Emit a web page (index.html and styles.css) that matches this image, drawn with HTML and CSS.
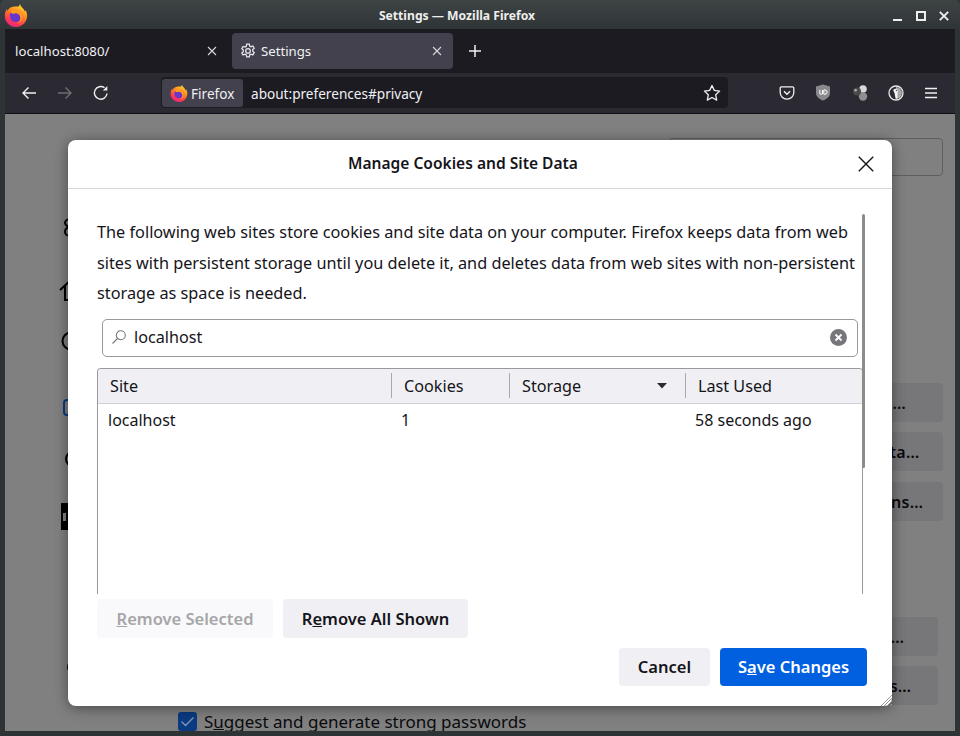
FILE: index.html
```html
<!DOCTYPE html>
<html lang="en">
<head>
<meta charset="utf-8">
<title>Settings — Mozilla Firefox</title>
<link rel="stylesheet" href="styles.css">
</head>
<body>
<svg class="defs" width="0" height="0" aria-hidden="true">
  <defs>
    <linearGradient id="fxg" x1="0.75" y1="0" x2="0.25" y2="1">
      <stop offset="0" stop-color="#ffdd33"/>
      <stop offset="0.4" stop-color="#ff8a1f"/>
      <stop offset="0.75" stop-color="#ff3a50"/>
      <stop offset="1" stop-color="#e3208f"/>
    </linearGradient>
    <symbol id="fx" viewBox="0 0 24 24">
      <path fill="url(#fxg)" d="M16 1c.5 2.500 2 3 3.500 5 .6.800 1 1.500 1.500 2.500.3-.5.500-1 .6-1.500 1.300 2.500 1.900 5 1.400 7.500C22 20 17.500 24 12 24 5.500 24 .8 19 .8 13 .8 10 1.700 7.500 3 6c0 .8.200 1.500.5 2 .8-2 2.500-3.500 4.500-4 2.500-.7 5-.5 6.500-.5.700-.7 1.300-1.500 1.500-2.500z"/>
      <circle cx="12" cy="13" r="6.200" fill="#6a35c9"/>
      <path fill="#ff9a1f" d="M6 9c2-2.500 6-3.500 9-2 3 1.500 4.500 5 3 9-1 2.500-3 4-5.500 4.200 2.500-1 4-3 3.800-5.700-.2-2.500-2.300-4.300-4.800-4.200-1 0-1.800.3-2.500.8-1-.8-2-1.700-3-2.100z"/>
    </symbol>
  </defs>
</svg>
<div class="window">
  <header class="titlebar">
    <svg class="app-logo" width="24" height="24"><use href="#fx"/></svg>
    <div class="title">Settings — Mozilla Firefox</div>
    <div class="win-controls">
      <svg width="10" height="10" viewBox="0 0 10 10"><rect x="0" y="8" width="9" height="2" fill="#eee"/></svg>
      <svg width="10" height="10" viewBox="0 0 10 10"><path d="M1 1h8v8H1z" fill="none" stroke="#eee" stroke-width="2"/></svg>
      <svg width="10" height="10" viewBox="0 0 10 10"><path d="M.8.800l8.400 8.400M9.200.800L.8 9.200" stroke="#eee" stroke-width="1.900"/></svg>
    </div>
  </header>

  <div class="tabstrip">
    <div class="tab">
      <span class="tab-label">localhost:8080/</span>
      <svg class="tab-close" width="10" height="10" viewBox="0 0 10 10"><path d="M1 1l8 8M9 1l-8 8" stroke="#d8d8dc" stroke-width="1.100"/></svg>
    </div>
    <div class="tab active">
      <svg class="gear" width="16" height="16" viewBox="0 0 16 16" fill="none" stroke="#e8e8ec" stroke-width="1.250"><path d="M6.700 1h2.600l.4 2 1.300.7 1.900-.7 1.300 2.300-1.500 1.300v1.700l1.500 1.300-1.300 2.300-1.900-.7-1.300.7-.4 2H6.700l-.4-2-1.300-.7-1.900.7L1.800 10l1.500-1.300V7L1.800 5.700l1.300-2.300 1.900.7 1.300-.7z"/><circle cx="8" cy="7.900" r="2.300"/></svg>
      <span class="tab-label">Settings</span>
      <svg class="tab-close" width="10" height="10" viewBox="0 0 10 10"><path d="M1 1l8 8M9 1l-8 8" stroke="#d8d8dc" stroke-width="1.100"/></svg>
    </div>
    <svg class="new-tab" width="14" height="14" viewBox="0 0 14 14"><path d="M7 1v12M1 7h12" stroke="#f0f0f4" stroke-width="1.500"/></svg>
  </div>

  <nav class="navbar">
    <div class="nav-left">
      <svg width="16" height="16" viewBox="0 0 16 16" fill="none" stroke="#f0f0f4" stroke-width="1.400"><path d="M15 8H2M7.500 2.500L2 8l5.500 5.500"/></svg>
      <svg width="16" height="16" viewBox="0 0 16 16" fill="none" stroke="#6f6e75" stroke-width="1.400"><path d="M1 8h13M8.500 2.500L14 8l-5.500 5.500"/></svg>
      <svg width="16" height="16" viewBox="0 0 16 16" fill="none" stroke="#f0f0f4" stroke-width="1.400"><path d="M14 8.500A6.300 6.300 0 1 1 11.500 2.800"/><path d="M14.300 1v4.500H9.800z" fill="#f0f0f4" stroke="none"/></svg>
    </div>
    <div class="urlbar">
      <div class="identity">
        <svg width="18" height="18"><use href="#fx"/></svg>
        <span>Firefox</span>
      </div>
      <span class="url">about:preferences#privacy</span>
      <svg class="star" width="18" height="18" viewBox="0 0 18 18" fill="none" stroke="#f0f0f4" stroke-width="1.300" stroke-linejoin="round"><path d="M9 1.500l2.300 4.900 5.300.7-3.900 3.700 1 5.300L9 13.500l-4.700 2.600 1-5.300L1.400 7.100l5.300-.7z"/></svg>
    </div>
    <div class="nav-right">
      <svg width="16" height="16" viewBox="0 0 16 16" fill="none" stroke="#f0f0f4" stroke-width="1.300"><path d="M2.500 1.800h11c.8 0 1.300.5 1.300 1.300v4.400c0 3.800-3 6.700-6.800 6.700s-6.800-2.900-6.800-6.700V3.100c0-.8.500-1.300 1.300-1.300z"/><path d="M5 6.300l3 3 3-3" stroke-width="1.400"/></svg>
      <svg width="16" height="17" viewBox="0 0 16 17"><path d="M8 .5l7 2v6.500c0 3.500-3.200 6.200-7 7.500-3.800-1.300-7-4-7-7.500V2.500z" fill="#8a8a8e"/><path d="M4.800 6v3a1.300 1.300 0 0 0 2.700 0V6M8.800 6v4.200h1.200a2.100 2.100 0 0 0 0-4.200z" fill="none" stroke="#fff" stroke-width="1"/></svg>
      <svg width="18" height="18" viewBox="0 0 18 18"><circle cx="12" cy="5" r="3.800" fill="#d8d8d8"/><circle cx="12" cy="12.500" r="4.200" fill="#8f8f8f"/><circle cx="6" cy="7.500" r="4" fill="#4a4a4a"/><circle cx="4.600" cy="6.200" r="1.300" fill="#b0b0b0"/></svg>
      <svg width="16" height="16" viewBox="0 0 16 16"><circle cx="8" cy="8" r="7" fill="#2b2a33" stroke="#e8e8e8" stroke-width="1.300"/><path d="M8 2a6 6 0 0 1 0 12z" fill="#a8a8a8"/><path d="M5.500 4.500c1-1.200 3.500-1 4.200.5.500 1-.2 1.700-.2 3v5.500h-2l-1-5.500c-.5-1-1.500-2.500-1-3.500z" fill="#f4f4f4"/><circle cx="8.500" cy="5.500" r=".8" fill="#555"/></svg>
      <svg width="14" height="12" viewBox="0 0 14 12"><path d="M1 1.500h12M1 6h12M1 10.500h12" stroke="#f0f0f4" stroke-width="1.300"/></svg>
    </div>
  </nav>

  <main class="content">
    <aside class="side-icons">
      <svg width="24" height="24" viewBox="0 0 24 24" fill="none" stroke="#000" stroke-width="2"><path d="M12 3c-4 0-6 2-6 4s2 3 4 4c-3 1-4 3-4 5s2 4 6 4"/></svg>
      <svg width="24" height="24" viewBox="0 0 24 24" fill="none" stroke="#000" stroke-width="2"><path d="M1 12L12 2M6 8v14h8"/></svg>
      <svg width="24" height="24" viewBox="0 0 24 24" fill="none" stroke="#000" stroke-width="2"><circle cx="12" cy="12" r="8.500"/></svg>
      <svg width="24" height="24" viewBox="0 0 24 24" fill="none" stroke="#0a3d80" stroke-width="2"><rect x="5" y="4" width="16" height="15" rx="3"/></svg>
      <svg width="24" height="24" viewBox="0 0 24 24" fill="none" stroke="#000" stroke-width="2"><circle cx="14" cy="12" r="7"/></svg>
      <svg width="24" height="28" viewBox="0 0 24 28"><rect x="2" y="1" width="22" height="27" fill="#000"/><rect x="4" y="11" width="3" height="8" fill="#808080"/></svg>
      <svg width="24" height="24" viewBox="0 0 24 24" fill="none" stroke="#000" stroke-width="2"><circle cx="15" cy="12" r="6"/></svg>
    </aside>
    <section class="page-col">
      <div class="find-box"></div>
      <div class="btn-stack first">
        <div class="bg-btn">Clear Data…</div>
        <div class="bg-btn">Manage Data…</div>
        <div class="bg-btn third">Exceptions…</div>
      </div>
      <div class="btn-stack second">
        <div class="bg-btn">Exceptions…</div>
        <div class="bg-btn">Saved Logins…</div>
      </div>
      <div class="check-row">
        <span class="checkbox"><svg width="19" height="19" viewBox="0 0 19 19" fill="none" stroke="#8096b8" stroke-width="1.400"><path d="M3.500 9.500l4 4 8-8"/></svg></span>
        <span class="check-label">S<u>u</u>ggest and generate strong passwords</span>
      </div>
    </section>
  </main>
  <div class="frame-bottom"></div>
</div>

<div class="dialog" role="dialog">
  <div class="dialog-head">
    <h1>Manage Cookies and Site Data</h1>
    <svg class="dialog-close" width="16" height="16" viewBox="0 0 16 16"><path d="M.8.800l14.400 14.400M15.200.800L.8 15.200" stroke="#15141a" stroke-width="1.400"/></svg>
  </div>
  <div class="dialog-body">
    <div class="scrollbar"></div>
    <p class="intro">The following web sites store cookies and site data on your computer. Firefox keeps data from web sites with persistent storage until you delete it, and deletes data from web sites with non-persistent storage as space is needed.</p>
    <div class="search">
      <svg width="16" height="16" viewBox="0 0 16 16" fill="none" stroke="#77767c" stroke-width="1.100"><circle cx="9.800" cy="6.200" r="4.500"/><path d="M6.500 9.500L1.500 14.500"/></svg>
      <span class="search-text">localhost</span>
      <svg class="clear" width="17" height="17" viewBox="0 0 17 17"><circle cx="8.500" cy="8.500" r="8.500" fill="#77767c"/><path d="M5.500 5.500l6 6M11.500 5.500l-6 6" stroke="#fff" stroke-width="1.800"/></svg>
    </div>
    <div class="table">
      <div class="thead">
        <div class="th c-site">Site</div>
        <div class="th c-cookies">Cookies</div>
        <div class="th c-storage">Storage<svg width="10" height="6" viewBox="0 0 10 6"><path d="M0 0h10L5 5.500z" fill="#2b2a33"/></svg></div>
        <div class="th c-used">Last Used</div>
      </div>
      <div class="tr">
        <div class="td c-site">localhost</div>
        <div class="td c-cookies">1</div>
        <div class="td c-storage"></div>
        <div class="td c-used">58 seconds ago</div>
      </div>
    </div>
    <div class="table-actions">
      <button class="btn disabled wide-a"><u>R</u>emove Selected</button>
      <button class="btn wide-b">R<u>e</u>move All Shown</button>
    </div>
    <div class="dialog-actions">
      <button class="btn cancel">Cancel</button>
      <button class="btn primary">S<u>a</u>ve Changes</button>
    </div>
  </div>
  <svg class="resizer" width="12" height="12" viewBox="0 0 12 12" stroke="#9a9a9a" stroke-width="1"><path d="M1 12L12 1M4 12l8-8M7 12l5-5M10 12l2-2"/></svg>
</div>
</body>
</html>
```
FILE: styles.css
```css
* { box-sizing: border-box; }
html, body { margin: 0; padding: 0; }
body {
  width: 960px;
  height: 736px;
  overflow: hidden;
  position: relative;
  font-family: "Noto Sans", "Open Sans", sans-serif;
  color: #15141a;
  background: #2e3436;
}
.defs { position: absolute; }
.window {
  display: flex;
  flex-direction: column;
  height: 736px;
}
.titlebar {
  height: 29px;
  flex: none;
  display: flex;
  align-items: center;
  justify-content: center;
  position: relative;
  padding: 2px 46px 0 0;
  background: linear-gradient(#3e4444, #2f3537);
  color: #eeeeec;
  font-size: 12.150px;
  font-weight: 700;
  border-radius: 5px 5px 0 0;
}
.app-logo { position: absolute; left: 4px; top: 3px; }
.win-controls {
  position: absolute;
  right: 11px;
  top: 11px;
  display: flex;
  gap: 13px;
}
.tabstrip {
  height: 44px;
  flex: none;
  margin: 0 5px;
  padding: 4px 0 4px 0;
  background: #1c1b22;
  display: flex;
  align-items: stretch;
  color: #f0f0f4;
  font-size: 13.200px;
}
.tab {
  width: 227px;
  display: flex;
  align-items: center;
  padding: 0 15px 0 10px;
  border-radius: 4px;
}
.tab.active {
  width: 221px;
  background: #42414d;
  padding: 0 11px 0 8px;
  gap: 5px;
}
.tab-label { flex: 1; }
.new-tab { align-self: center; margin-left: 15px; }
.navbar {
  height: 41px;
  flex: none;
  margin: 0 5px;
  padding: 4px 0 5px;
  background: #2b2a33;
  border-bottom: 1px solid #0f0f14;
  display: flex;
  align-items: stretch;
  color: #f0f0f4;
  font-size: 13.600px;
}
.nav-left {
  width: 156px;
  padding-left: 16px;
  display: flex;
  align-items: center;
  gap: 20px;
}
.urlbar {
  width: 567px;
  background: #1c1b22;
  border-radius: 4px;
  display: flex;
  align-items: center;
  padding: 2px 7px 2px 1px;
}
.identity {
  height: 28px;
  width: 81px;
  background: #42414d;
  border-radius: 3px;
  display: flex;
  align-items: center;
  gap: 3px;
  padding-left: 8px;
}
.identity span, .url { padding-top: 1px; }
.url { flex: 1; margin-left: 8px; }
.nav-right {
  flex: 1;
  display: flex;
  align-items: center;
  justify-content: space-between;
  padding: 0 17px 0 51px;
}
.content {
  flex: 1;
  min-height: 0;
  margin: 0 5px;
  background: #808080;
  display: flex;
  overflow: hidden;
  position: relative;
}
.side-icons {
  width: 63px;
  flex: none;
  padding: 102px 0 0 54px;
  display: flex;
  flex-direction: column;
}
.side-icons svg { flex: none; }
.side-icons svg:nth-child(2) { margin-top: 38px; }
.side-icons svg:nth-child(3) { margin-top: 27px; }
.side-icons svg:nth-child(4) { margin-top: 43px; }
.side-icons svg:nth-child(5) { margin-top: 27px; }
.side-icons svg:nth-child(6) { margin-top: 31px; }
.side-icons svg:nth-child(7) { margin-top: 125px; }
.page-col { flex: 1; position: relative; padding-top: 24px; }
.find-box {
  width: 274px;
  height: 38px;
  margin: 0 12px 0 auto;
  border: 1px solid #5f5f5f;
  border-radius: 4px;
}
.btn-stack { display: flex; flex-direction: column; align-items: flex-end; gap: 10px; }
.btn-stack.first { margin-top: 207px; padding-right: 12px; }
.btn-stack.first .bg-btn { width: 164px; }
.btn-stack.first .bg-btn:nth-child(1) { padding-right: 8px; }
.btn-stack.first .bg-btn:nth-child(2) { padding-right: 4px; }
.btn-stack.first .third { margin-top: 1px; padding-left: 24px; }
.btn-stack.second { margin-top: 96px; padding-right: 17px; }
.btn-stack.second .bg-btn { width: 162px; }
.btn-stack.second .bg-btn:nth-child(1) { padding-right: 6px; }
.btn-stack.second .bg-btn:nth-child(2) { padding-right: 10px; }
.bg-btn {
  height: 39px;
  background: #777779;
  border-radius: 4px;
  display: flex;
  align-items: center;
  justify-content: center;
  font-size: 16px;
  letter-spacing: 0.3px;
  font-weight: 600;
  color: #0a0a0d;
  white-space: nowrap;
}
.check-row {
  position: absolute;
  left: 110px;
  top: 598px;
  display: flex;
  align-items: flex-start;
  gap: 7px;
  font-size: 17px;
  line-height: 20px;
  color: #0a0a0d;
  white-space: nowrap;
}
.checkbox {
  width: 19px;
  height: 19px;
  background: #0a3a80;
  border-radius: 3px;
  display: block;
}
.checkbox svg { display: block; }
.frame-bottom { height: 5px; flex: none; }

.dialog {
  position: absolute;
  left: 68px;
  top: 140px;
  width: 824px;
  height: 566px;
  background: #fff;
  border-radius: 8px;
  box-shadow: 0 2px 14px rgba(0, 0, 0, 0.45);
  display: flex;
  flex-direction: column;
}
.dialog-head {
  height: 49px;
  flex: none;
  display: flex;
  align-items: center;
  justify-content: center;
  padding: 0 34px 3px 0;
  border-bottom: 1px solid #d7d7db;
  position: relative;
}
.dialog-head h1 {
  margin: 0;
  font-size: 15.550px;
  font-weight: 600;
}
.dialog-close { position: absolute; right: 18px; top: 16px; }
.dialog-body {
  flex: 1;
  position: relative;
  padding: 28px 29px 20px;
  display: flex;
  flex-direction: column;
  min-height: 0;
}
.scrollbar {
  position: absolute;
  left: 794px;
  top: 25px;
  width: 3px;
  height: 254px;
  background: #8c8c88;
  border-radius: 2px;
}
.intro {
  margin: 0;
  width: 764px;
  font-size: 16.270px;
  line-height: 30.600px;
}
.search {
  width: 756px;
  height: 38px;
  margin: 10.200px 0 0 5px;
  flex: none;
  border: 1px solid #9a9a9e;
  border-radius: 5px;
  display: flex;
  align-items: center;
  padding: 0 10px 1px 8px;
  gap: 7px;
  font-size: 16.200px;
}
.search-text { flex: 1; }
.table {
  width: 766px;
  height: 226px;
  margin-top: 11px;
  flex: none;
  border: 1px solid #9a9a9e;
  border-bottom: 0;
  border-radius: 4px 4px 0 0;
  font-size: 16.200px;
  overflow: hidden;
}
.thead {
  height: 35px;
  display: flex;
  align-items: center;
  background: #f0f0f4;
  border-bottom: 1px solid #cfcfd8;
}
.tr {
  height: 32px;
  display: flex;
  align-items: center;
  font-size: 16px;
}
.th {
  height: 25px;
  display: flex;
  align-items: center;
  padding-left: 12px;
  border-left: 1px solid #a9a9ad;
}
.th.c-site { border-left: 0; }
.th svg { margin-left: auto; margin-right: 18px; }
.td { padding-left: 10px; }
.c-site { width: 293px; }
.c-cookies { width: 118px; }
.c-storage { width: 176px; }
.c-used { flex: 1; }
.table-actions {
  display: flex;
  gap: 10px;
  margin-top: 5px;
  flex: none;
}
.btn {
  font-family: inherit;
  font-size: 16.500px;
  font-weight: 600;
  border: 0;
  border-radius: 4px;
  background: #f0f0f4;
  color: #15141a;
  height: 39px;
  padding: 0;
}
.btn.disabled { background: #f9f9fb; color: #a6a6a8; }
.wide-a { width: 176px; }
.wide-b { width: 185px; }
.dialog-actions {
  display: flex;
  justify-content: flex-end;
  gap: 10px;
  margin-top: 10px;
  margin-right: -4px;
}
.dialog-actions .btn { height: 38px; }
.cancel { width: 91px; }
.primary { width: 147px; background: #0060df; color: #fff; }
.resizer { position: absolute; right: 0; bottom: 0; }
```
